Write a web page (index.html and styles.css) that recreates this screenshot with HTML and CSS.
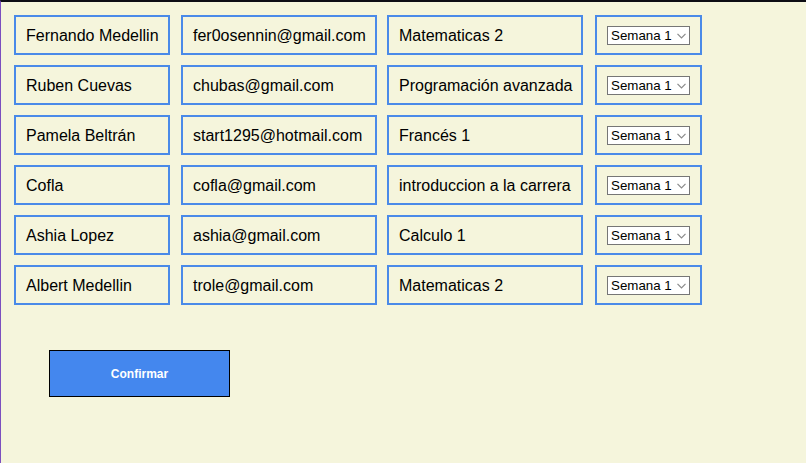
FILE: index.html
```html
<!DOCTYPE html>
<html lang="es">
<head>
<meta charset="utf-8">
<title>Asignación</title>
<link rel="stylesheet" href="styles.css">
</head>
<body>
<div class="page">
  <div class="grid">
    <div class="cell">Fernando Medellin</div>
    <div class="cell">fer0osennin@gmail.com</div>
    <div class="cell">Matematicas 2</div>
    <div class="cell"><span class="pick"><select class="week"><option>Semana 1</option></select><svg class="chev" width="9" height="6" viewBox="0 0 9 6"><path d="M0.5 0.8 L4.5 4.8 L8.5 0.8" fill="none" stroke="#8a8a8a" stroke-width="1.2"/></svg></span></div>

    <div class="cell">Ruben Cuevas</div>
    <div class="cell">chubas@gmail.com</div>
    <div class="cell">Programación avanzada</div>
    <div class="cell"><span class="pick"><select class="week"><option>Semana 1</option></select><svg class="chev" width="9" height="6" viewBox="0 0 9 6"><path d="M0.5 0.8 L4.5 4.8 L8.5 0.8" fill="none" stroke="#8a8a8a" stroke-width="1.2"/></svg></span></div>

    <div class="cell">Pamela Beltrán</div>
    <div class="cell">start1295@hotmail.com</div>
    <div class="cell">Francés 1</div>
    <div class="cell"><span class="pick"><select class="week"><option>Semana 1</option></select><svg class="chev" width="9" height="6" viewBox="0 0 9 6"><path d="M0.5 0.8 L4.5 4.8 L8.5 0.8" fill="none" stroke="#8a8a8a" stroke-width="1.2"/></svg></span></div>

    <div class="cell">Cofla</div>
    <div class="cell">cofla@gmail.com</div>
    <div class="cell">introduccion a la carrera</div>
    <div class="cell"><span class="pick"><select class="week"><option>Semana 1</option></select><svg class="chev" width="9" height="6" viewBox="0 0 9 6"><path d="M0.5 0.8 L4.5 4.8 L8.5 0.8" fill="none" stroke="#8a8a8a" stroke-width="1.2"/></svg></span></div>

    <div class="cell">Ashia Lopez</div>
    <div class="cell">ashia@gmail.com</div>
    <div class="cell">Calculo 1</div>
    <div class="cell"><span class="pick"><select class="week"><option>Semana 1</option></select><svg class="chev" width="9" height="6" viewBox="0 0 9 6"><path d="M0.5 0.8 L4.5 4.8 L8.5 0.8" fill="none" stroke="#8a8a8a" stroke-width="1.2"/></svg></span></div>

    <div class="cell">Albert Medellin</div>
    <div class="cell">trole@gmail.com</div>
    <div class="cell">Matematicas 2</div>
    <div class="cell"><span class="pick"><select class="week"><option>Semana 1</option></select><svg class="chev" width="9" height="6" viewBox="0 0 9 6"><path d="M0.5 0.8 L4.5 4.8 L8.5 0.8" fill="none" stroke="#8a8a8a" stroke-width="1.2"/></svg></span></div>
  </div>
  <button class="confirm" type="button">Confirmar</button>
</div>
</body>
</html>
```
FILE: styles.css
```css
html, body {
  margin: 0;
  height: 100%;
}
body {
  background: #f5f5dc;
  font-family: "Liberation Sans", Arial, sans-serif;
  color: #000;
  box-sizing: border-box;
  border-top: 2px solid #0d0d14;
  border-left: 1px solid #7b4fbf;
}
.page {
  padding: 13px 0 0 13px;
}
.grid {
  display: grid;
  grid-template-columns: 156px 207px 206px 119px;
  grid-auto-rows: 40px;
  row-gap: 10px;
}
.cell {
  box-sizing: border-box;
  border: 2px solid #4a8ae8;
  padding: 2px 10px 0 10px;
  display: flex;
  align-items: center;
  font-size: 16px;
  white-space: nowrap;
}
.cell:nth-child(4n+2) { margin-left: 11px; }
.cell:nth-child(4n+3) { margin-left: 10px; }
.cell:nth-child(4n+4) { margin-left: 12px; padding-top: 1px; }
.pick {
  position: relative;
  display: inline-block;
}
.week {
  appearance: none;
  -webkit-appearance: none;
  box-sizing: border-box;
  width: 83px;
  height: 19px;
  margin: 0;
  padding: 0 0 0 3px;
  background: #fff;
  border: 1px solid #767676;
  border-radius: 0;
  color: #000;
  font-family: "Liberation Sans", Arial, sans-serif;
  font-size: 13.33px;
  display: block;
}
.chev {
  position: absolute;
  right: 4px;
  top: 7px;
  pointer-events: none;
}
.confirm {
  display: block;
  margin: 45px 0 0 35px;
  width: 181px;
  height: 47px;
  background: #4487ee;
  border: 1px solid #000;
  color: #fff;
  font-family: "Liberation Sans", Arial, sans-serif;
  font-weight: bold;
  font-size: 12px;
  padding: 0;
}
```
